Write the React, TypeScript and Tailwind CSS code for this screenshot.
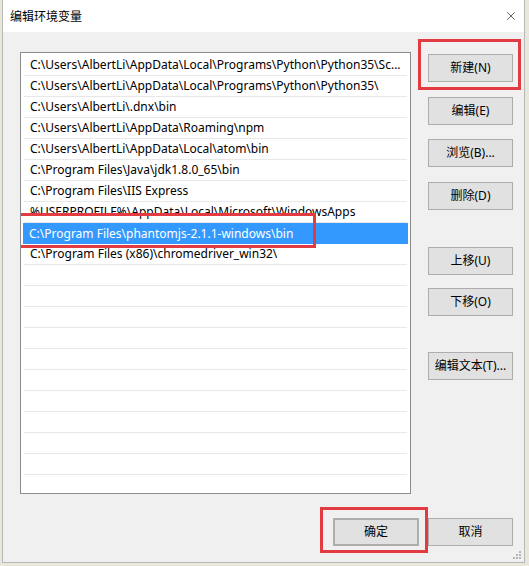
import { X } from 'lucide-react';

const PATHS = [
  'C:\\Users\\AlbertLi\\AppData\\Local\\Programs\\Python\\Python35\\Sc...',
  'C:\\Users\\AlbertLi\\AppData\\Local\\Programs\\Python\\Python35\\',
  'C:\\Users\\AlbertLi\\.dnx\\bin',
  'C:\\Users\\AlbertLi\\AppData\\Roaming\\npm',
  'C:\\Users\\AlbertLi\\AppData\\Local\\atom\\bin',
  'C:\\Program Files\\Java\\jdk1.8.0_65\\bin',
  'C:\\Program Files\\IIS Express',
  '%USERPROFILE%\\AppData\\Local\\Microsoft\\WindowsApps',
  'C:\\Program Files\\phantomjs-2.1.1-windows\\bin',
  'C:\\Program Files (x86)\\chromedriver_win32\\',
];

const SELECTED = 8;
const TOTAL_ROWS = 21;

const font = "font-['Noto_Sans','Noto_Sans_CJK_SC',sans-serif]";

function Button({ label, className = '' }: { label: string; className?: string }) {
  return (
    <div
      className={`h-[28px] flex items-center justify-center bg-[#e1e1e1] border border-[#adadad] text-[12px] text-black ${className}`}
    >
      {label}
    </div>
  );
}

function Highlight({ className }: { className: string }) {
  return <div className={`absolute border-[3px] border-[#e23b42] pointer-events-none ${className}`} />;
}

export default function App() {
  const rows = Array.from({ length: TOTAL_ROWS }, (_, i) => PATHS[i] ?? '');

  return (
    <div className={`w-[529px] h-[566px] bg-[#e9e6dc] overflow-hidden ${font}`}>
      <div className="relative ml-[2px] w-[523px] h-[563px] flex flex-col border-x border-b border-[#b8b8b8]">
        {/* title bar */}
        <div className="h-[32px] bg-white flex items-center justify-between pl-[7px] pr-[6px]">
          <span className="text-[12px] text-black font-['Noto_Sans_CJK_SC',sans-serif]">编辑环境变量</span>
          <X size={14} strokeWidth={1.2} className="text-[#222]" />
        </div>

        {/* body */}
        <div className="flex-1 bg-[#f0f0f0] pl-[17px] pt-[20px]">
          <div className="flex">
            {/* path list */}
            <div className="relative w-[391px] h-[442px] bg-white border border-[#8c8c8c] overflow-hidden">
              <div className="px-[2px] pt-[2px]">
                {rows.map((p, i) => (
                  <div
                    key={i}
                    className={`h-[21px] flex items-center pl-[6px] text-[12px] whitespace-nowrap ${
                      i === SELECTED ? 'bg-[#3399ff] text-white' : 'text-black border-b border-[#e8e8e8] mx-[1px]'
                    }`}
                  >
                    {p}
                  </div>
                ))}
              </div>
              <Highlight className="left-[-3px] top-[160px] w-[298px] h-[35px]" />
            </div>

            {/* right buttons */}
            <div className="ml-[17px] w-[85px] flex flex-col">
              <div className="relative mt-[2px]">
                <Button label="新建(N)" />
                <Highlight className="-left-[10px] -right-[8px] -top-[15px] -bottom-[8px]" />
              </div>
              <Button label="编辑(E)" className="mt-[15px]" />
              <Button label="浏览(B)..." className="mt-[14px]" />
              <Button label="删除(D)" className="mt-[15px]" />
              <Button label="上移(U)" className="mt-[37px]" />
              <Button label="下移(O)" className="mt-[13px]" />
              <Button label="编辑文本(T)..." className="mt-[36px]" />
            </div>
          </div>

          {/* bottom buttons */}
          <div className="w-[493px] mt-[24px] flex justify-end gap-[9px]">
            <div className="relative w-[86px]">
              <Button label="确定" className="border-2 border-[#0078d7]" />
              <Highlight className="-left-[13px] -right-[9px] -top-[11px] -bottom-[7px]" />
            </div>
            <Button label="取消" className="w-[85px]" />
          </div>
        </div>

        {/* size grip */}
        <svg className="absolute right-[2px] bottom-[2px]" width="10" height="10" viewBox="0 0 10 10">
          {[
            [8, 2],
            [5, 5],
            [8, 5],
            [2, 8],
            [5, 8],
            [8, 8],
          ].map(([x, y], i) => (
            <rect key={i} x={x - 1} y={y - 1} width="2" height="2" fill="#b5b5b5" />
          ))}
        </svg>
      </div>
    </div>
  );
}
